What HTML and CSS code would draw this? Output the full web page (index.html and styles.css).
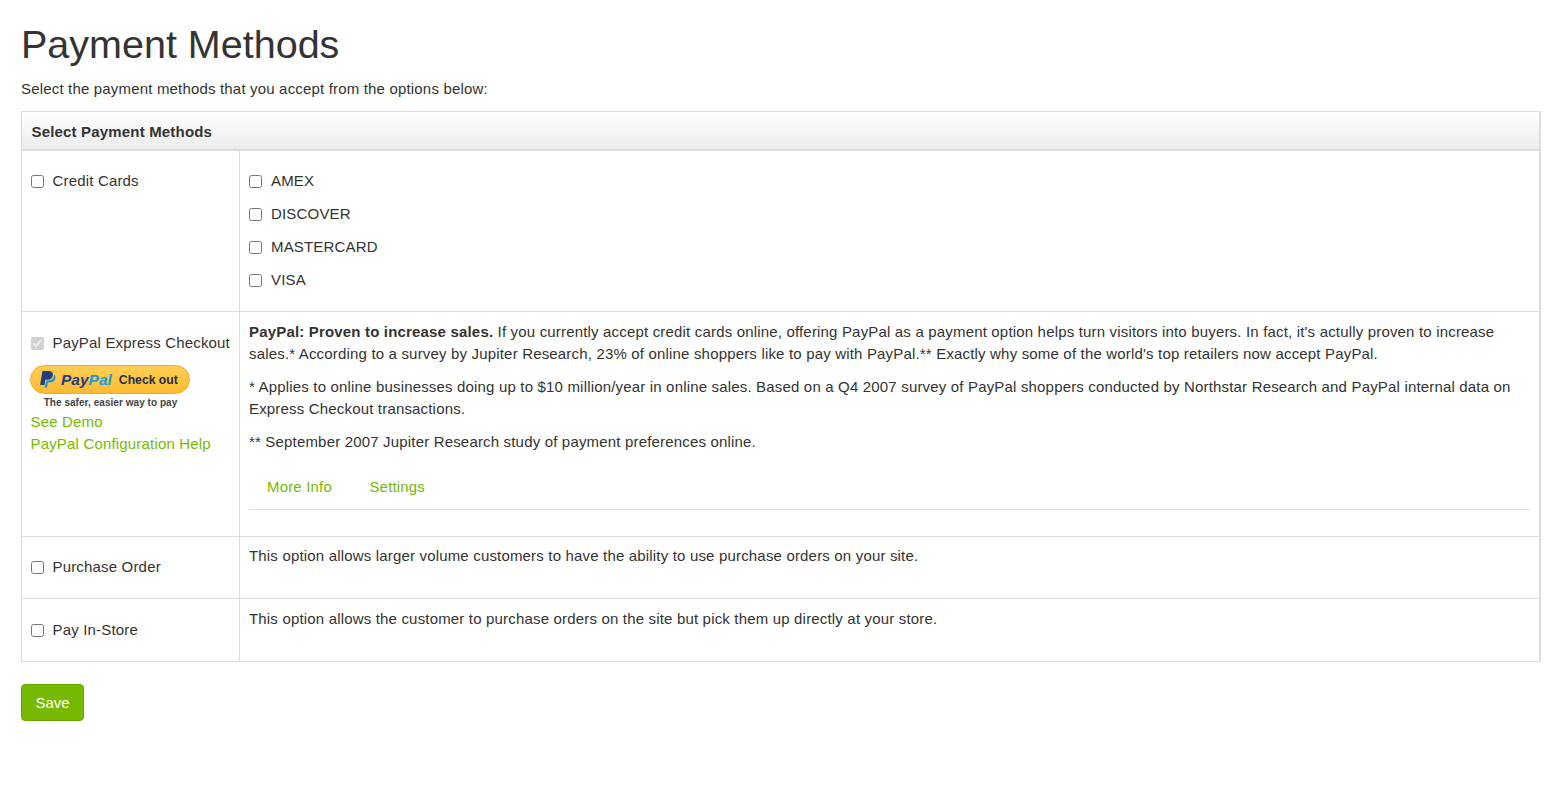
FILE: index.html
```html
<!DOCTYPE html>
<html lang="en">
<head>
<meta charset="utf-8">
<title>Payment Methods</title>
<link rel="stylesheet" href="styles.css">
</head>
<body>
<h1 class="title">Payment Methods</h1>
<p class="intro">Select the payment methods that you accept from the options below:</p>
<div class="panel">
  <div class="panel-head">Select Payment Methods</div>
  <div class="row row-cards">
    <div class="left"><label class="opt"><input type="checkbox">Credit Cards</label></div>
    <div class="right cards">
      <label class="opt"><input type="checkbox">AMEX</label>
      <label class="opt"><input type="checkbox">DISCOVER</label>
      <label class="opt"><input type="checkbox">MASTERCARD</label>
      <label class="opt"><input type="checkbox">VISA</label>
    </div>
  </div>
  <div class="row row-paypal">
    <div class="left left-paypal">
      <label class="opt"><input type="checkbox" checked disabled>PayPal Express Checkout</label>
      <div class="pp">
        <div class="pp-btn">
          <svg class="pp-icon" viewBox="0 0 16 18" width="17" height="19" aria-hidden="true">
            <path fill="#179bd7" d="M5 16.500h2.600l.8-4.600h2c3 0 4.900-1.700 5.200-4.300.2-1.500-.3-2.700-1.400-3.400.1 3.200-1.800 5.500-5 5.500H7.300z"/>
            <path fill="#253b80" d="M3.200 1H9c2.800 0 4.400 1.400 4.100 3.800-.3 2.800-2.300 4.500-5.100 4.500H6l-.9 5H1z"/>
          </svg>
          <span class="pp-pay">Pay</span><span class="pp-pal">Pal</span>
          <span class="pp-check">Check out</span>
        </div>
        <div class="pp-tag">The safer, easier way to pay</div>
      </div>
      <a class="link" href="#">See Demo</a>
      <a class="link" href="#">PayPal Configuration Help</a>
    </div>
    <div class="right desc">
      <p><b>PayPal: Proven to increase sales.</b> If you currently accept credit cards online, offering PayPal as a payment option helps turn visitors into buyers. In fact, it's actully proven to increase sales.* According to a survey by Jupiter Research, 23% of online shoppers like to pay with PayPal.** Exactly why some of the world's top retailers now accept PayPal.</p>
      <p>* Applies to online businesses doing up to $10 million/year in online sales. Based on a Q4 2007 survey of PayPal shoppers conducted by Northstar Research and PayPal internal data on Express Checkout transactions.</p>
      <p>** September 2007 Jupiter Research study of payment preferences online.</p>
      <div class="tabs"><a class="link" href="#">More Info</a><a class="link" href="#">Settings</a></div>
    </div>
  </div>
  <div class="row row-po">
    <div class="left left-low"><label class="opt"><input type="checkbox">Purchase Order</label></div>
    <div class="right desc desc-tight"><p>This option allows larger volume customers to have the ability to use purchase orders on your site.</p></div>
  </div>
  <div class="row row-store">
    <div class="left left-store"><label class="opt"><input type="checkbox">Pay In-Store</label></div>
    <div class="right desc"><p>This option allows the customer to purchase orders on the site but pick them up directly at your store.</p></div>
  </div>
</div>
<button class="save" type="button">Save</button>
</body>
</html>
```
FILE: styles.css
```css
* { box-sizing: border-box; }
html, body { margin: 0; }
body {
  padding: 0 17px 0 21px;
  background: #fff;
  color: #333;
  font-family: "Liberation Sans", Arial, sans-serif;
  font-size: 15px;
  line-height: 22px;
  letter-spacing: 0.175px;
}
.title {
  margin: 0;
  padding-top: 20px;
  font-size: 39.5px;
  line-height: 48px;
  font-weight: 400;
  letter-spacing: 0;
}
.intro { margin: 10px 0 11px; }
.panel { border: 1px solid #ddd; border-right-width: 2px; }
.panel-head {
  height: 39px;
  padding: 9px 9.5px;
  font-weight: 700;
  background: linear-gradient(#fff, #ececec);
  border-bottom: 2px solid #ddd;
}
.row { display: grid; grid-template-columns: 218px 1fr; border-bottom: 1px solid #ddd; }
.row:last-child { border-bottom: 0; }
.row-cards { height: 161px; }
.row-paypal { height: 225px; }
.row-po { height: 62px; }
.row-store { height: 62px; }
.left { padding: 19px 4px 0 8.5px; border-right: 1px solid #ddd; }
.left-paypal { padding-top: 20px; }
.left-low { padding-top: 19px; }
.left-store { padding-top: 20px; }
.right { padding: 9px 9px 0; }
.cards { padding-top: 19px; display: flex; flex-direction: column; gap: 11px; }
.opt { display: flex; align-items: center; white-space: nowrap; }
.opt input { width: 13px; height: 13px; margin: 1px 9px 0 0; flex: none; }
.desc p { margin: 0 0 11px; }
.desc-tight { padding-top: 8px; }
.pp { margin-top: 11px; height: 46px; margin-left: -0.5px; }
.pp-btn {
  display: flex;
  align-items: center;
  width: 160px;
  height: 29px;
  padding-left: 8px;
  border-radius: 15px;
  border: 1px solid #f0a92a;
  background: linear-gradient(#ffcf55, #fdbb32);
  letter-spacing: 0;
}
.pp-icon { margin-right: 5px; flex: none; }
.pp-pay, .pp-pal { font-size: 15.5px; font-weight: 700; font-style: italic; }
.pp-pay { color: #253b80; }
.pp-pal { color: #179bd7; }
.pp-check { margin-left: 7px; font-size: 12.200px; font-weight: 700; color: #222d3f; }
.pp-tag {
  margin-top: 2px;
  width: 160px;
  text-align: center;
  padding-left: 1px;
  font-size: 10px;
  line-height: 13px;
  font-weight: 700;
  color: #444;
  letter-spacing: 0.05px;
}
.link { display: block; color: #76b900; text-decoration: none; }
.tabs {
  display: flex;
  gap: 37.5px;
  height: 46px;
  padding: 12px 0 0 18px;
  border-bottom: 1px solid #ddd;
}
.save {
  display: block;
  margin-top: 22px;
  width: 63px;
  height: 37px;
  padding: 0;
  border: 1px solid #68a600;
  border-radius: 4px;
  background: #76b900;
  color: #fff;
  font: 15px "Liberation Sans", Arial, sans-serif;
}
```
